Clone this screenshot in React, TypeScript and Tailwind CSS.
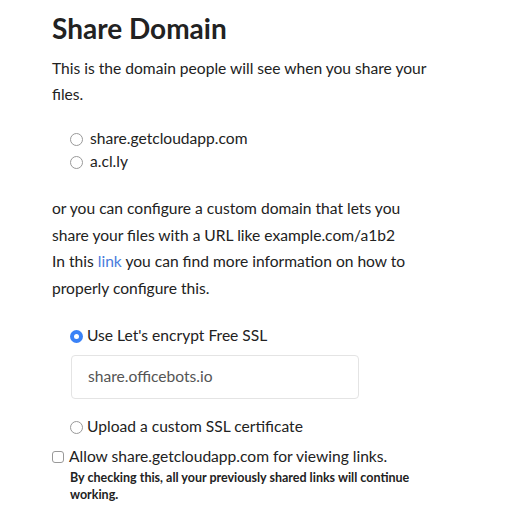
export default function App() {
  return (
    <div className="min-h-screen bg-white text-[#222] pl-[52px] pr-4 pt-[8px]" style={{ fontFamily: 'Lato, sans-serif' }}>
      <h1 className="text-[28px] font-bold leading-[40px] text-[#222]">Share Domain</h1>
      <p className="mt-[7px] text-[15.6px] leading-[26px] w-[382px]">
        This is the domain people will see when you share your files.
      </p>
      <div className="mt-[22px] ml-[18px] flex flex-col gap-[3px] text-[15.6px]">
        <label className="flex items-center gap-[7px] h-[20px]">
          <span className="w-[13px] h-[13px] rounded-full border border-[#999] bg-white" />
          share.getcloudapp.com
        </label>
        <label className="flex items-center gap-[7px] h-[20px]">
          <span className="w-[13px] h-[13px] rounded-full border border-[#999] bg-white" />
          a.cl.ly
        </label>
      </div>
      <div className="mt-[23px] text-[15.6px] leading-[26.5px] w-[382px]">
        <p>or you can configure a custom domain that lets you share your files with a URL like example.com/a1b2</p>
        <p>
          <span>In this </span>
          <span className="text-[#4a7bdc]">link</span>
          <span> you can find more information on how to</span>
          <br />
          <span>properly configure this.</span>
        </p>
      </div>
      <div className="mt-[25px] ml-[18px] flex flex-col text-[15.6px]">
        <label className="flex items-center gap-[4px] h-[20px]">
          <span className="w-[13px] h-[13px] rounded-full bg-[#3a82f7] flex items-center justify-center">
            <span className="w-[5px] h-[5px] rounded-full bg-white" />
          </span>
          Use Let's encrypt Free SSL
        </label>
        <div className="mt-[9px] ml-[1px] w-[288px] h-[44px] rounded-[4px] border border-[#e4e4e4] flex items-center pl-[16px] text-[#555]">
          share.officebots.io
        </div>
        <label className="mt-[18px] flex items-center gap-[4px] h-[20px]">
          <span className="w-[13px] h-[13px] rounded-full border border-[#999] bg-white" />
          Upload a custom SSL certificate
        </label>
      </div>
      <div className="mt-[10px] flex flex-col">
        <label className="flex items-center gap-[5px] h-[20px] text-[15.6px]">
          <span className="w-[12px] h-[12px] rounded-[3px] border border-[#999] bg-white" />
          Allow share.getcloudapp.com for viewing links.
        </label>
        <p className="ml-[18px] mt-[2px] text-[12.5px] font-bold leading-[17px] w-[380px]">
          By checking this, all your previously shared links will continue working.
        </p>
      </div>
    </div>
  );
}
